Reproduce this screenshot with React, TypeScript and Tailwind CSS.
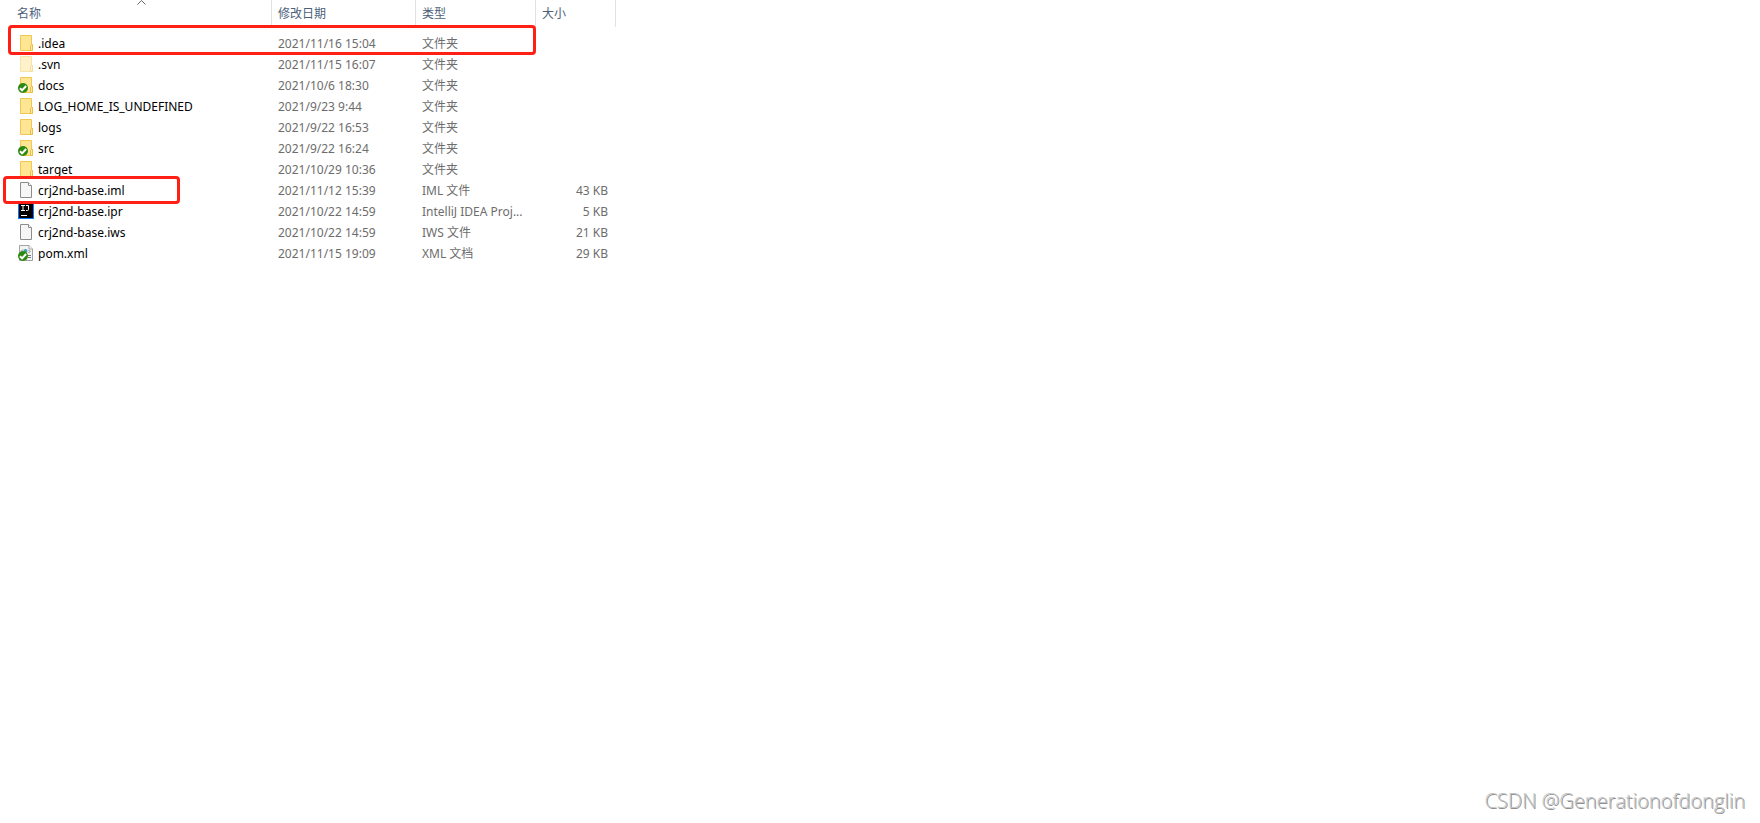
import React, { useState } from 'react';

type IconKind = 'folder' | 'hidden' | 'folderSvn' | 'file' | 'idea' | 'xmlSvn';

interface FileEntry {
  name: string;
  date: string;
  type: string;
  size?: number;
  icon: IconKind;
}

const files: FileEntry[] = [
  { name: '.idea', date: '2021/11/16 15:04', type: '文件夹', icon: 'folder' },
  { name: '.svn', date: '2021/11/15 16:07', type: '文件夹', icon: 'hidden' },
  { name: 'docs', date: '2021/10/6 18:30', type: '文件夹', icon: 'folderSvn' },
  { name: 'LOG_HOME_IS_UNDEFINED', date: '2021/9/23 9:44', type: '文件夹', icon: 'folder' },
  { name: 'logs', date: '2021/9/22 16:53', type: '文件夹', icon: 'folder' },
  { name: 'src', date: '2021/9/22 16:24', type: '文件夹', icon: 'folderSvn' },
  { name: 'target', date: '2021/10/29 10:36', type: '文件夹', icon: 'folder' },
  { name: 'crj2nd-base.iml', date: '2021/11/12 15:39', type: 'IML 文件', size: 43, icon: 'file' },
  { name: 'crj2nd-base.ipr', date: '2021/10/22 14:59', type: 'IntelliJ IDEA Proj...', size: 5, icon: 'idea' },
  { name: 'crj2nd-base.iws', date: '2021/10/22 14:59', type: 'IWS 文件', size: 21, icon: 'file' },
  { name: 'pom.xml', date: '2021/11/15 19:09', type: 'XML 文档', size: 29, icon: 'xmlSvn' },
];

const FolderShape = () => (
  <>
    <path d="M2.5 .5h11v9h1v6h-12z" fill="#ffe28a" stroke="#efc94f" />
    <path d="M3 1h10v8.5l-1 .5v5H3z" fill="#ffe594" />
    <path d="M12.5 15.5v-5l1-1h1v6z" fill="#ffe9a2" stroke="#e9bf45" />
  </>
);

const PageShape = () => (
  <>
    <path d="M2.5 .5h8l3 3v12h-11z" fill="#f6f6f6" stroke="#8d8d8d" />
    <path d="M10.5 .5v3h3" fill="#fff" stroke="#8d8d8d" />
  </>
);

const XmlShape = () => (
  <>
    <path d="M1.5 .5H11L14.5 4v11.5h-13z" fill="#f4f4f4" stroke="#a3a3a3" />
    <path d="M11 .5V4h3.5" fill="#fff" stroke="#a3a3a3" />
    <path d="M5 4.5l-2 2M10.5 5L12 6.5 10.5 8M10 10.5h3M10 12.5h3" fill="none" stroke="#777" />
    <circle cx="7.5" cy="6" r="2" fill="#3fa3b8" />
  </>
);

const SvnBadge = () => (
  <>
    <circle cx="5" cy="11" r="5" fill="#2d8a10" />
    <path d="M2 11.2l2.1 2.2 4-4.4" fill="none" stroke="#fff" strokeWidth="2" />
  </>
);

const FileIcon: React.FC<{ kind: IconKind }> = ({ kind }) => (
  <svg viewBox="0 0 16 16" className={kind === 'hidden' ? 'size-4 shrink-0 opacity-50' : 'size-4 shrink-0'} aria-hidden="true">
    {(kind === 'folder' || kind === 'hidden' || kind === 'folderSvn') && <FolderShape />}
    {kind === 'file' && <PageShape />}
    {kind === 'xmlSvn' && <XmlShape />}
    {kind === 'idea' && (
      <>
        <path d="M0 0h16v16H0z" fill="#087cfa" />
        <path d="M1 1h14v14H1z" fill="#000" />
        <path d="M3 2.5h4M5 2.5v5M3 7.5h4M8 2.5h2.5v4q0 1-1 1H8M3 12.5h6" fill="none" stroke="#fff" />
      </>
    )}
    {(kind === 'folderSvn' || kind === 'xmlSvn') && <SvnBadge />}
  </svg>
);

const App: React.FC = () => {
  const [ascending, setAscending] = useState(true);
  const rows = ascending ? files : [...files].reverse();

  return (
    <div className="relative flex min-h-screen flex-col bg-white font-['Noto_Sans','Noto_Sans_CJK_SC',sans-serif] text-xs text-[#6d6d6d]">
      <table className="w-[616px] table-fixed border-separate border-spacing-0 text-left">
        <colgroup>
          <col className="w-[272px]" />
          <col className="w-36" />
          <col className="w-[120px]" />
          <col className="w-20" />
        </colgroup>
        <thead className="text-[#4c607a]">
          <tr className="h-[27px]">
            <th className="relative border-r border-[#e2e2e2] p-0 font-normal">
              <button type="button" className="block w-full pl-[17px] text-left" onClick={() => setAscending(!ascending)}>
                名称
              </button>
              <svg viewBox="0 0 9 5" className="absolute top-0 left-[137px] h-[5px] w-[9px]" aria-hidden="true">
                <path d="M.5 4.5l4-4 4 4" fill="none" stroke="#666" />
              </svg>
            </th>
            <th className="border-r border-[#e2e2e2] p-0 pl-1.5 font-normal">修改日期</th>
            <th className="border-r border-[#e2e2e2] p-0 pl-1.5 font-normal">类型</th>
            <th className="border-r border-[#e2e2e2] p-0 pl-1.5 font-normal">大小</th>
          </tr>
        </thead>
        <tbody className="before:block before:h-1.5 before:content-['']">
          {rows.map((file) => (
            <tr key={file.name} className="h-[21px] leading-5">
              <td className="p-0 pl-[18px] align-top">
                <div className="flex items-start gap-1 pt-px text-black">
                  <span className="pt-px">
                    <FileIcon kind={file.icon} />
                  </span>
                  <span>{file.name}</span>
                </div>
              </td>
              <td className="p-0 pl-1.5">{file.date}</td>
              <td className="p-0 pl-1.5 whitespace-nowrap">{file.type}</td>
              <td className="p-0 pr-2 text-right">{file.size !== undefined && `${file.size} KB`}</td>
            </tr>
          ))}
        </tbody>
      </table>

      {/* Red marks drawn over the listing */}
      <div className="pointer-events-none absolute top-[25px] left-2 h-[30px] w-[528px] rounded-sm border-3 border-[#ff1f14]" />
      <div className="pointer-events-none absolute top-44 left-[3px] h-7 w-[177px] rounded-sm border-3 border-[#ff1f14]" />

      <footer className="mt-auto self-end pr-[15px] pb-2 font-['Open_Sans','Noto_Sans',sans-serif] text-xl leading-7 font-light text-[#c4c4c4] [text-shadow:1px_1px_0_#8f8f8f]">
        CSDN @Generationofdonglin
      </footer>
    </div>
  );
};

export default App;
